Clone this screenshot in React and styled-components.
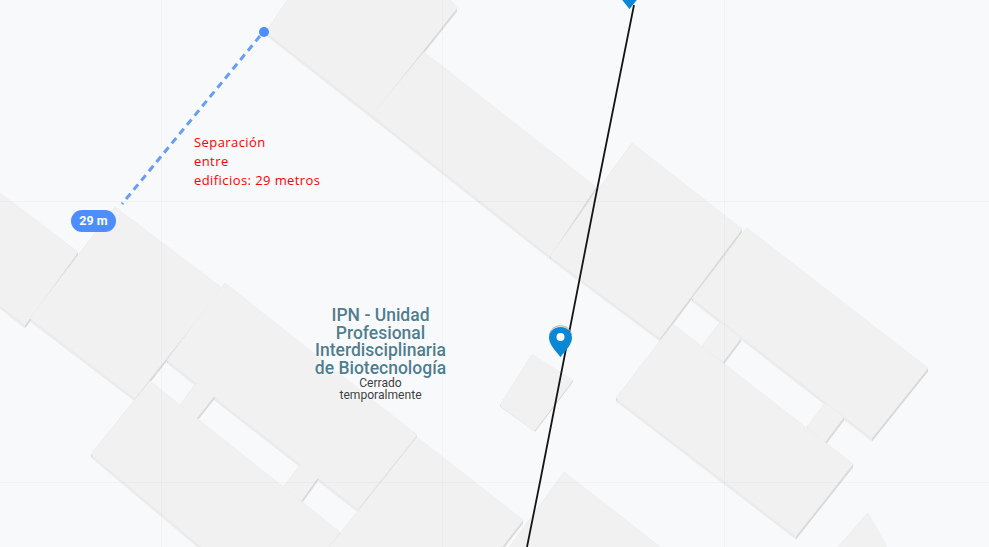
import React from 'react';
import styled, { createGlobalStyle } from 'styled-components';

const GlobalStyle = createGlobalStyle`
  html, body {
    margin: 0;
    padding: 0;
    background: #f8f9fb;
  }
`;

const Map = styled.div`
  position: relative;
  width: 989px;
  height: 547px;
  overflow: hidden;
  background: #f8f9fb;
  font-family: Roboto, "Liberation Sans", sans-serif;
`;

const Canvas = styled.svg`
  position: absolute;
  left: 0;
  top: 0;
  display: block;
`;

const PinIcon = styled.svg`
  position: absolute;
  left: ${(p) => p.$x}px;
  top: ${(p) => p.$y}px;
`;

const DistancePill = styled.div`
  position: absolute;
  left: 71px;
  top: 210px;
  width: 45px;
  height: 22px;
  border-radius: 11px;
  background: #4d8dff;
  color: #fff;
  font-size: 12.5px;
  font-weight: 700;
  line-height: 22px;
  text-align: center;
`;

const Note = styled.div`
  position: absolute;
  left: 194px;
  top: 133px;
  color: #ff0000;
  font-family: "Open Sans", sans-serif;
  font-size: 13px;
  line-height: 19px;
  letter-spacing: 0.42px;
  white-space: nowrap;
`;

const PlaceLabel = styled.div`
  position: absolute;
  left: 290px;
  top: 307px;
  width: 181px;
  text-align: center;
  text-shadow: 0 0 2px #fff, 0 0 2px #fff;
`;

const PlaceName = styled.div`
  color: #4f7d90;
  font-size: 17.5px;
  font-weight: 500;
  line-height: 17.7px;
`;

const PlaceStatus = styled.div`
  margin-top: -1px;
  color: #3c4043;
  font-size: 12.1px;
  line-height: 12.3px;
`;

// edificios: cada grupo comparte el mismo volumen
const buildings = [
  // parte superior
  [
    [[290, -4], [447, -4], [457, 8], [372, 115], [266, 32]],
    [[372, 115], [424, 52], [596, 187], [550, 256]],
  ],
  // bloque derecho
  [
    [[632, 143], [742, 229], [660, 338], [550, 256]],
    [[747, 228], [928, 368], [872, 438], [692, 298]],
    [[673, 324], [853, 464], [796, 536], [616, 398]],
    [[720, 322], [741, 338], [723, 362], [702, 346]],
    [[825, 403], [844, 417], [825, 442], [807, 427]],
  ],
  // bloque izquierdo
  [
    [[-4, 190], [78, 252], [25, 325], [-4, 302]],
    [[115, 207], [222, 288], [135, 398], [30, 318]],
    [[225, 283], [417, 435], [358, 509], [167, 360]],
    [[150, 381], [340, 532], [322, 556], [212, 556], [91, 454]],
    [[196, 383], [215, 395], [196, 419], [180, 405]],
    [[302, 463], [319, 476], [301, 501], [283, 487]],
  ],
  [[[417, 437], [523, 520], [495, 556], [322, 556]]],
  [[[564, 472], [672, 556], [503, 556]]],
  [[[868, 513], [892, 556], [830, 556]]],
];

const smallBuilding = [[532, 354], [573, 380], [535, 430], [500, 405]];

const toPoints = (pts) => pts.map((p) => p.join(',')).join(' ');

function Sides({ shape, depth }) {
  return shape.map((a, i) => {
    const b = shape[(i + 1) % shape.length];
    const slope = (b[1] - a[1]) * (b[0] - a[0]);
    const quad = [a, b, [b[0], b[1] + depth], [a[0], a[1] + depth]];
    return <polygon key={i} points={toPoints(quad)} fill={slope > 0 ? '#ebebec' : '#d9d9da'} />;
  });
}

function Pin({ x, y }) {
  return (
    <PinIcon $x={x} $y={y} width="25" height="36" viewBox="0 0 25 36">
      <path d="M1.400 11C2.600 5 7 1.800 12.500 1.800S22.400 5 23.600 11" fill="none" stroke="#a9acb0" strokeWidth="1" />
      <path
        d="M12.500 3C6.100 3 1 7.900 1 14c0 7.200 8.400 14.400 11.500 19.300C15.600 28.400 24 21.200 24 14 24 7.900 18.900 3 12.500 3z"
        fill="#0a88d6"
      />
      <circle cx="12.500" cy="13" r="4" fill="#fff" />
    </PinIcon>
  );
}

export default function App() {
  return (
    <Map>
      <GlobalStyle />
      <Canvas width="989" height="547" viewBox="0 0 989 547">
        {buildings.map((group, g) => (
          <g key={g}>
            {group.map((shape, i) => (
              <Sides key={i} shape={shape} depth={3.5} />
            ))}
            {group.map((shape, i) => (
              <polygon key={i} points={toPoints(shape)} fill="#f1f1f2" stroke="#efeff0" strokeWidth="0.6" />
            ))}
          </g>
        ))}
        <Sides shape={smallBuilding} depth={2} />
        <polygon points={toPoints(smallBuilding)} fill="#f1f1f2" />

        {/* juntas entre teselas */}
        <g stroke="#000" strokeOpacity="0.022" strokeWidth="1">
          <line x1="161.500" y1="0" x2="161.500" y2="547" />
          <line x1="442.500" y1="0" x2="442.500" y2="547" />
          <line x1="724.500" y1="0" x2="724.500" y2="547" />
          <line x1="0" y1="201.500" x2="989" y2="201.500" />
          <line x1="0" y1="482.500" x2="989" y2="482.500" />
        </g>

        <polyline points="634,5 595,200 540,482 527,547" fill="none" stroke="#151515" strokeWidth="1.8" />

        <line x1="260" y1="36" x2="122" y2="204" stroke="#669df6" strokeWidth="3" strokeDasharray="7 5" />
        <circle cx="264" cy="32" r="5" fill="#4d8dff" />
      </Canvas>

      <Pin x={617} y={-24} />
      <Pin x={548} y={324} />

      <DistancePill>29 m</DistancePill>

      <Note>
        Separación
        <br />
        entre
        <br />
        edificios: 29 metros
      </Note>

      <PlaceLabel>
        <PlaceName>
          IPN - Unidad
          <br />
          Profesional
          <br />
          Interdisciplinaria
          <br />
          de Biotecnología
        </PlaceName>
        <PlaceStatus>
          Cerrado
          <br />
          temporalmente
        </PlaceStatus>
      </PlaceLabel>
    </Map>
  );
}
